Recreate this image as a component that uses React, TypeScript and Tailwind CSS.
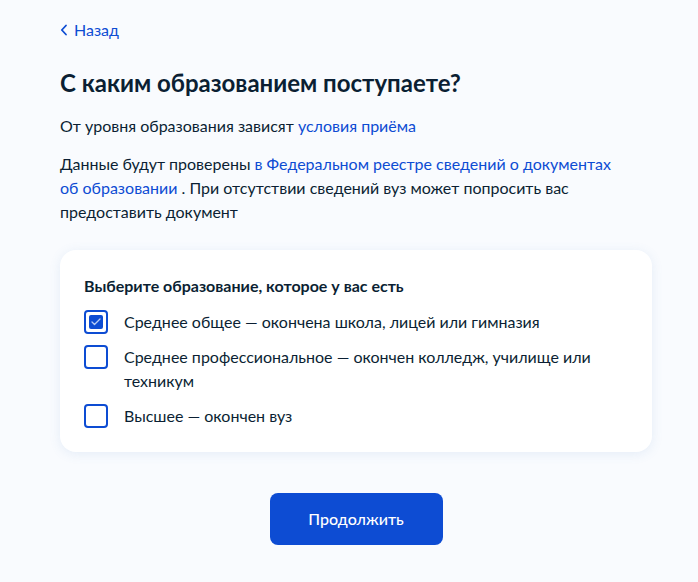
import { useState } from "react";

const options = [
  "Среднее общее — окончена школа, лицей или гимназия",
  "Среднее профессиональное — окончен колледж, училище или техникум",
  "Высшее — окончен вуз",
];

function Checkbox({ checked }: { checked: boolean }) {
  return (
    <span className="w-6 h-6 shrink-0 rounded-[4px] border-2 border-[#0d4cd3] bg-white flex items-center justify-center">
      {checked && (
        <span className="w-[14px] h-[14px] rounded-[2px] bg-[#0d4cd3] flex items-center justify-center">
          <svg width="10" height="8" viewBox="0 0 10 8" fill="none">
            <path d="M1 4l2.5 2.5L9 1" stroke="#b9cdf5" strokeWidth="1.3" strokeLinecap="round" strokeLinejoin="round" />
          </svg>
        </span>
      )}
    </span>
  );
}

export default function App() {
  const [selected, setSelected] = useState<number[]>([0]);

  const toggle = (i: number) =>
    setSelected((s) => (s.includes(i) ? s.filter((x) => x !== i) : [...s, i]));

  return (
    <div className="min-h-[582px] bg-[#f9fbfe] text-[#0b1f33] font-['Lato','Noto_Sans',sans-serif]">
      <div className="w-[592px] ml-[60px] pt-[18px]">
        {/* Back */}
        <a href="#" className="flex items-center gap-[6px] text-[#0d4cd3] text-[16px] leading-6">
          <svg width="8" height="12" viewBox="0 0 8 12" fill="none">
            <path d="M6 1.5L1.8 6 6 10.5" stroke="#0d4cd3" strokeWidth="1.8" strokeLinecap="round" strokeLinejoin="round" />
          </svg>
          Назад
        </a>

        <h1 className="mt-[27px] text-[24px] leading-7 font-bold">С каким образованием поступаете?</h1>

        <p className="mt-[17px] text-[16px] leading-6">
          От уровня образования зависят <a href="#" className="text-[#0d4cd3]">условия приёма</a>
        </p>

        <p className="mt-[14px] max-w-[560px] text-[16px] leading-6">
          Данные будут проверены{" "}
          <a href="#" className="text-[#0d4cd3]">в Федеральном реестре сведений о документах об образовании</a> . При
          отсутствии сведений вуз может попросить вас предоставить документ
        </p>

        {/* Card */}
        <div className="mt-[26px] bg-white rounded-2xl shadow-[0_2px_12px_rgba(86,134,199,0.12)] px-6 pt-[24px] pb-6">
          <div className="text-[16px] leading-6 font-bold">Выберите образование, которое у вас есть</div>
          <div className="mt-3 flex flex-col gap-[11px]">
            {options.map((o, i) => (
              <label key={o} className="flex items-start gap-4 cursor-pointer" onClick={() => toggle(i)}>
                <Checkbox checked={selected.includes(i)} />
                <span className="text-[16px] leading-6">{o}</span>
              </label>
            ))}
          </div>
        </div>

        <div className="mt-[41px] flex justify-center">
          <button className="w-[173px] h-[52px] rounded-lg bg-[#0d4cd3] text-white text-[16px] font-medium">
            Продолжить
          </button>
        </div>
      </div>
    </div>
  );
}
